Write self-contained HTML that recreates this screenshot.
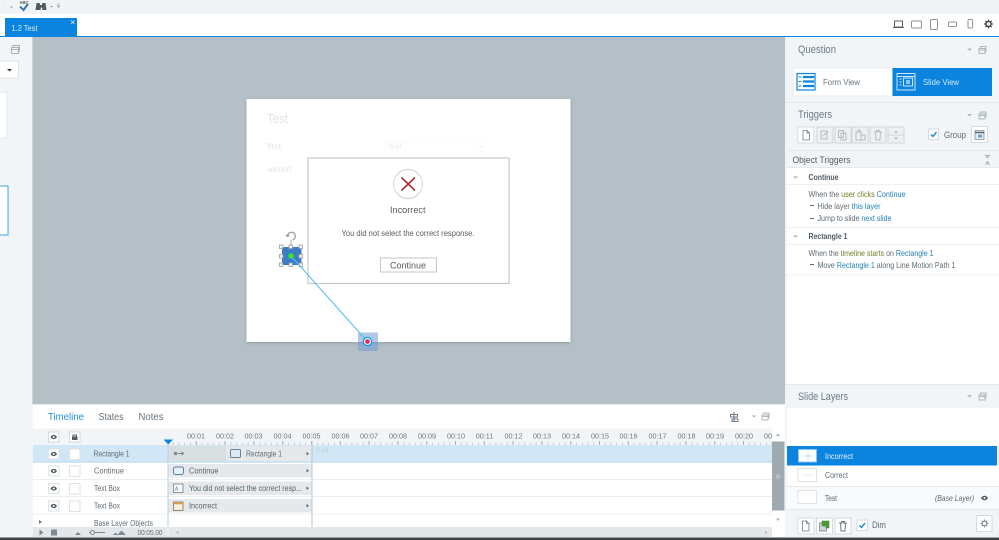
<!DOCTYPE html>
<html><head><meta charset="utf-8"><style>
html,body{margin:0;padding:0;width:999px;height:540px;overflow:hidden;background:#fff}
svg{display:block;filter:blur(.35px)}
text{font-family:"Liberation Sans",sans-serif;font-size:8px;fill:#5f6b73}
.b{fill:#1f82b8}.g{fill:#6f7f24}.h{font-size:11px;fill:#6d7a84}.r{font-size:7.200px;fill:#6b777f}
.i{fill:none;stroke:#8a959c;stroke-width:1}
.ib{fill:#fff;stroke:#d5dbdf;stroke-width:1}
.dis{fill:#eef1f3;stroke:#d0d5d8;stroke-width:1}
</style></head><body>
<svg width="999" height="540" viewBox="0 0 999 540" xmlns="http://www.w3.org/2000/svg">
<defs>
<pattern id="tk" patternUnits="userSpaceOnUse" x="167" y="440" width="5.76" height="5"><rect x="0" y="2.500" width="1" height="2.500" fill="#c4ccd1"/></pattern>
<pattern id="tk2" patternUnits="userSpaceOnUse" x="167" y="440" width="28.8" height="5"><rect x="0" y="1" width="1" height="4" fill="#a5afb5"/></pattern>
<filter id="s" x="-5%" y="-5%" width="110%" height="110%"><feDropShadow dx="0" dy="1" stdDeviation="1.5" flood-color="#55636b" flood-opacity=".4"/></filter>
</defs>
<rect width="999" height="540" fill="#fff"/>
<!-- top bar -->
<rect width="999" height="14" fill="#f1f4f7"/>
<path d="M0 3h3v7H0z" fill="#fafafa" stroke="#ddd" stroke-width=".5"/>
<path d="M10 6.500h3l-1.500 1.500z" fill="#8a959c"/>
<text x="19.500" y="4" style="font-size:4.500px;font-weight:bold;fill:#555" textLength="9" lengthAdjust="spacingAndGlyphs">ABC</text>
<path d="M20 6.500l3.500 3.500 4.500-6" fill="none" stroke="#2a74b8" stroke-width="1.900"/>
<path d="M35.500 10l1-7h3l.6 2h1.800l.6-2h3l1 7h-4l-.4-2.500h-1.200l-.4 2.500z" fill="#505a60"/>
<path d="M50 6h3l-1.500 1.500zM57 5.500h3L58.500 8z" fill="#8a959c"/><path d="M57 4h3" stroke="#8a959c" stroke-width=".6"/>
<!-- tab row -->
<rect x="5" y="18" width="72" height="18" fill="#0a84de"/>
<text x="11.500" y="31" style="font-size:8.500px;fill:#d8ecfa" textLength="26" lengthAdjust="spacingAndGlyphs">1.2 Test</text>
<path d="M71 20.500l3.500 3.500M74.500 20.500L71 24" stroke="#d8ecfa" stroke-width=".8"/>
<rect y="36" width="999" height="1.300" fill="#0a84de"/>
<!-- device icons -->
<path d="M894.500 21h8v6h-8zM893 27.500h11" class="i" style="stroke:#56636b"/>
<rect x="911.500" y="21" width="10" height="7" rx="1" class="i"/>
<rect x="930.500" y="19.500" width="7" height="10" rx="1" class="i"/>
<rect x="948.500" y="22" width="8" height="4.500" rx="1" class="i"/>
<rect x="968" y="19.500" width="4.500" height="8.500" rx="1" class="i"/>
<g transform="translate(988.500 24)"><path d="M0-4.400V4.400M-4.400 0H4.400M-3.100-3.100L3.100 3.100M3.100-3.100L-3.100 3.100" stroke="#36424a" stroke-width="1.300"/><circle r="2.500" fill="#fff" stroke="#36424a" stroke-width="1.300"/></g>
<!-- left panel -->
<rect y="37" width="33" height="503" fill="#f1f5f8"/>
<rect x="32" y="37" width="1" height="367" fill="#cfd6da"/>
<path d="M11.500 47.500h7v6h-7zM13 47.500v-2h6.500v5.500h-1M11.500 49.500h7" class="i" style="stroke:#aab3b9"/>
<rect x="-1" y="61" width="19.500" height="17" fill="#fff" stroke="#dfe4e7"/>
<path d="M7 69h5l-2.500 2.500z" fill="#2e3a42"/>
<rect x="-1" y="92" width="8" height="46" fill="#fff" stroke="#e2e6e9"/>
<rect x="-1" y="186" width="9" height="49" fill="#fff" stroke="#38a7e6"/>
<!-- canvas -->
<rect x="33" y="37" width="752" height="367" fill="#b5c0c6"/>
<rect x="246.500" y="99" width="324" height="243" fill="#fff" filter="url(#s)"/>
<text x="267" y="123" style="font-size:12.500px;fill:#e2e2e2" textLength="21" lengthAdjust="spacingAndGlyphs">Test</text>
<text x="267" y="149" style="font-size:8.500px;fill:#e4e4e4" textLength="14" lengthAdjust="spacingAndGlyphs">first</text>
<text x="389" y="149" style="font-size:8.500px;fill:#ececec" textLength="13" lengthAdjust="spacingAndGlyphs">first</text>
<rect x="385" y="142" width="98" height="10" fill="none" stroke="#f9f9f9"/>
<path d="M479 146.500h3l-1.500 1.500z" fill="#e4e4e4"/>
<text x="267" y="172" style="font-size:8.500px;fill:#e4e4e4" textLength="24" lengthAdjust="spacingAndGlyphs">second</text>
<!-- dialog -->
<rect x="308" y="158" width="201" height="125.500" fill="#fff" stroke="#c8c8c8" stroke-width="1.200"/>
<circle cx="408" cy="184" r="14.500" fill="#fff" stroke="#cfcfcf" stroke-width=".9"/>
<path d="M401.500 177.500L415 190.500M415 177.500L401.500 190.500" stroke="#a72c33" stroke-width="1.600"/>
<text x="390" y="213" style="font-size:9.500px;fill:#5a5a5a" textLength="35.500" lengthAdjust="spacingAndGlyphs">Incorrect</text>
<text x="341.500" y="236" style="font-size:8px;fill:#5a5a5a" textLength="133" lengthAdjust="spacingAndGlyphs">You did not select the correct response.</text>
<rect x="380.500" y="258" width="56" height="14" fill="#fff" stroke="#c4c4c4" stroke-width="1"/>
<text x="390" y="268.500" style="font-size:9.500px;fill:#5a5a5a" textLength="36" lengthAdjust="spacingAndGlyphs">Continue</text>
<!-- motion path object -->
<rect x="282" y="247" width="19.500" height="18" fill="#3a7ec6"/>
<path d="M291 246v-6.500" stroke="#aaa" stroke-width="1"/>
<path d="M287.500 236.500a3.900 3.900 0 1 1 5.500 3.200M287.500 236.500l-1.500-1.500M287.500 236.500l1.700-1.200" fill="none" stroke="#9a9a9a" stroke-width="1.300"/>
<g fill="#f4f4f4" stroke="#9c9c9c" stroke-width=".8">
<rect x="279.500" y="245" width="3.500" height="3.500"/><rect x="289" y="245" width="3.500" height="3.500"/><rect x="299" y="245" width="3.500" height="3.500"/>
<rect x="279.500" y="254.500" width="3.500" height="3.500"/><rect x="299" y="254.500" width="3.500" height="3.500"/>
<rect x="279.500" y="263" width="3.500" height="3.500"/><rect x="289" y="263" width="3.500" height="3.500"/><rect x="299" y="263" width="3.500" height="3.500"/>
</g>
<rect x="358" y="332.500" width="20" height="18.500" fill="#6d9bd6" fill-opacity=".55"/>
<path d="M291 256L367 341" stroke="#53bdf5" stroke-width="1"/>
<circle cx="291" cy="256" r="2.700" fill="#3fe61f"/>
<circle cx="367.500" cy="341.500" r="4.700" fill="#0a9bf0"/><circle cx="367.500" cy="341.500" r="3.500" fill="#fff"/><circle cx="367.500" cy="341.500" r="2.400" fill="#e8304f"/>
<!-- right panel -->
<rect x="785" y="37" width="214" height="500" fill="#f1f5f8"/>
<text x="798" y="53" class="h" textLength="38" lengthAdjust="spacingAndGlyphs">Question</text>
<path d="M967 48.500h5l-2.500 2.500z" fill="#b0b9bf"/>
<path d="M979 48.500h6v5h-6zM980.500 48.500v-2h5.500v5h-1M979 50h6" class="i" style="stroke:#b0b9bf"/>
<rect x="793" y="68" width="99.500" height="28" fill="#fff" stroke="#e9edf0"/>
<rect x="892.500" y="68" width="99.500" height="28" fill="#0a84de"/>
<rect x="797" y="73.500" width="18" height="16.500" fill="#fff" stroke="#0a84de" stroke-width="1.200"/>
<path d="M803 77h11M803 81.500h11M803 86h11" stroke="#0a84de" stroke-width="2.200"/>
<path d="M798.500 77h3M798.500 81.500h3M798.500 86h3" stroke="#0a84de" stroke-width="1"/>
<text x="823" y="85" style="font-size:8.500px;fill:#67747d" textLength="37" lengthAdjust="spacingAndGlyphs">Form View</text>
<rect x="897" y="73.500" width="18" height="16.500" fill="none" stroke="#cde6f8" stroke-width="1"/>
<path d="M897 76.500h18M899.500 79h2M899.500 82h2M899.500 85h2" stroke="#cde6f8" stroke-width="1"/>
<rect x="903.500" y="78" width="9" height="8" fill="none" stroke="#cde6f8"/><rect x="906" y="80" width="4" height="4" fill="#8cc6ee"/>
<text x="923" y="85" style="font-size:8.500px;fill:#d4ebfa" textLength="36" lengthAdjust="spacingAndGlyphs">Slide View</text>
<rect x="785" y="102" width="214" height="1" fill="#e3e8eb"/>
<text x="798" y="118" class="h" textLength="34" lengthAdjust="spacingAndGlyphs">Triggers</text>
<path d="M967 114h5l-2.500 2.500z" fill="#b0b9bf"/>
<path d="M979 114h6v5h-6zM980.500 114v-2h5.500v5h-1M979 115.500h6" class="i" style="stroke:#b0b9bf"/>
<rect x="798" y="127" width="16" height="16" class="ib"/>
<path d="M803 130.500h4l2.500 2.500v7h-6.500zM807 130.500v2.500h2.500" fill="none" stroke="#6d7a84" stroke-width=".8"/>
<rect x="817" y="127" width="16" height="16" class="dis"/><path d="M821 131h6v8h-6zM823 136l5-5" fill="none" stroke="#b3bbc0"/>
<rect x="835" y="127" width="16" height="16" class="dis"/><path d="M838.500 130.500h5v7h-5zM841 133h5v7h-5z" fill="none" stroke="#b3bbc0"/>
<rect x="852" y="127" width="16" height="16" class="dis"/><path d="M856 132h5v8h-5zM861 135h4v5h-4zM858 132v-2h2v2" fill="none" stroke="#b3bbc0"/>
<rect x="870" y="127" width="16" height="16" class="dis"/><path d="M874 132h8M875.500 132l.5 8h4l.5-8M876.500 132v-1.500h3v1.500" fill="none" stroke="#b3bbc0"/>
<rect x="888" y="127" width="16" height="16" class="dis"/><path d="M888 135h16" stroke="#d0d5d8"/><path d="M894 132.500h4l-2-2zM894 137.500h4l-2 2z" fill="#a8b1b7"/>
<rect x="928.500" y="129" width="10" height="10.500" fill="#fff" stroke="#d5dbdf"/>
<path d="M931 134.500l2 2 3.500-4.500" fill="none" stroke="#0a84de" stroke-width="1.400"/>
<text x="944" y="138" style="font-size:9px" textLength="22" lengthAdjust="spacingAndGlyphs">Group</text>
<rect x="971.500" y="126.500" width="16" height="16" class="ib"/>
<path d="M975 130.500h9v9h-9z" fill="#e8edf1" stroke="#7c8a93" stroke-width=".8"/><path d="M975 132.500h9" stroke="#566470" stroke-width="1.400"/><rect x="978" y="134.500" width="4" height="3" fill="#6fa5d4"/>
<rect x="787" y="150" width="212" height="1" fill="#e3e8eb"/>
<rect x="787" y="151" width="212" height="16.500" fill="#f1f5f8"/>
<text x="792.500" y="163" style="font-size:9px;fill:#4f5c64" textLength="58" lengthAdjust="spacingAndGlyphs">Object Triggers</text>
<path d="M985 155.500h5M985 164h5" stroke="#a5aeb4"/><path d="M985.500 156.500h4l-2 2zM985.500 163h4l-2-2z" fill="#a5aeb4"/>
<rect x="787" y="167.500" width="212" height="217" fill="#fff"/>
<rect x="787" y="167" width="212" height="1" fill="#e6eaed"/>
<rect x="787" y="184" width="212" height="1" fill="#eef1f3"/>
<path d="M793 176.500h5l-2.500 2z" fill="#a0aab0"/>
<text x="808.500" y="180" style="font-size:8px;font-weight:bold;fill:#4f5c64" textLength="30" lengthAdjust="spacingAndGlyphs">Continue</text>
<text x="808.500" y="197" style="font-size:7.800px" textLength="97" lengthAdjust="spacingAndGlyphs">When the <tspan class="g">user clicks</tspan> <tspan class="b">Continue</tspan></text>
<path d="M810 205.500h4M810 218.500h4" stroke="#5f6b73"/>
<text x="817.500" y="209" style="font-size:7.800px" textLength="63" lengthAdjust="spacingAndGlyphs">Hide layer <tspan class="b">this layer</tspan></text>
<text x="817.500" y="221" style="font-size:7.800px" textLength="74" lengthAdjust="spacingAndGlyphs">Jump to slide <tspan class="b">next slide</tspan></text>
<rect x="787" y="227" width="212" height="1" fill="#eef1f3"/>
<rect x="787" y="244" width="212" height="1" fill="#eef1f3"/>
<path d="M793 235.500h5l-2.500 2z" fill="#a0aab0"/>
<text x="808.500" y="239" style="font-size:8px;font-weight:bold;fill:#4f5c64" textLength="39" lengthAdjust="spacingAndGlyphs">Rectangle 1</text>
<text x="808.500" y="256" style="font-size:7.800px" textLength="125" lengthAdjust="spacingAndGlyphs">When the <tspan class="g">timeline starts</tspan> on <tspan class="b">Rectangle 1</tspan></text>
<path d="M810 264.500h4" stroke="#5f6b73"/>
<text x="817.500" y="268" style="font-size:7.800px" textLength="138" lengthAdjust="spacingAndGlyphs">Move <tspan class="b">Rectangle 1</tspan> along Line Motion Path 1</text>
<rect x="787" y="274.500" width="212" height="1" fill="#eef1f3"/>
<!-- slide layers -->
<rect x="785" y="384" width="214" height="24" fill="#f1f5f8"/>
<rect x="785" y="384" width="214" height="1" fill="#e3e8eb"/>
<text x="798" y="400" class="h" textLength="50" lengthAdjust="spacingAndGlyphs">Slide Layers</text>
<path d="M967 395h5l-2.500 2.500z" fill="#b0b9bf"/>
<path d="M979 395h6v5h-6zM980.500 395v-2h5.500v5h-1M979 396.500h6" class="i" style="stroke:#b0b9bf"/>
<rect x="787" y="408" width="212" height="38" fill="#fff"/>
<rect x="787" y="446" width="210" height="19.500" fill="#0a84de"/>
<rect x="798.500" y="449.500" width="18" height="12.500" fill="#fff" stroke="#8cc6ee"/>
<path d="M803 456h10M808 452.500v7" stroke="#b9dcf4"/>
<text x="825" y="459" style="font-size:8.200px;fill:#e4f2fc" textLength="28" lengthAdjust="spacingAndGlyphs">Incorrect</text>
<rect x="787" y="465.500" width="212" height="20.500" fill="#fff"/>
<rect x="798" y="468.500" width="18.500" height="13" fill="#fff" stroke="#dfe4e7"/>
<path d="M803 475h10M808 472v7" stroke="#eef0f2"/>
<text x="825" y="478" style="font-size:8.200px" textLength="23" lengthAdjust="spacingAndGlyphs">Correct</text>
<rect x="787" y="486" width="212" height="1" fill="#e6eaed"/>
<rect x="787" y="487" width="212" height="22" fill="#f8fafb"/>
<rect x="798" y="490.500" width="18.500" height="13" fill="#fff" stroke="#dfe4e7"/>
<text x="825" y="501" style="font-size:8.200px" textLength="12" lengthAdjust="spacingAndGlyphs">Test</text>
<text x="935" y="501" style="font-size:8.200px;font-style:italic" textLength="39" lengthAdjust="spacingAndGlyphs">(Base Layer)</text>
<path d="M981 498c2-3 5-3 7 0-2 3-5 3-7 0z" fill="#4f5c64"/><circle cx="984.500" cy="498" r="1" fill="#fff"/>
<rect x="787" y="509" width="212" height="1" fill="#e3e8eb"/>
<rect x="798" y="518" width="16" height="16" class="ib"/>
<path d="M802.500 521h4l2.500 2.500v7.500h-6.500zM806.500 521v2.500h2.500" fill="none" stroke="#6d7a84" stroke-width=".8"/>
<rect x="816.500" y="518" width="16" height="16" class="ib"/>
<path d="M819.500 523h7v8h-7z" fill="#cfd6da" stroke="#6d7a84" stroke-width=".7"/><path d="M822 521h7v7h-3v-2h-4z" fill="#4e9a3a" stroke="#3b7a2c" stroke-width=".5"/>
<rect x="835" y="518" width="16" height="16" class="ib"/>
<path d="M839 523h8M840.500 523l.5 8h4l.5-8M841.500 523v-1.500h3v1.500" fill="none" stroke="#6d7a84"/>
<rect x="857" y="520" width="10.500" height="10.500" fill="#fff" stroke="#d5dbdf"/>
<path d="M859.500 525.500l2 2 3.500-4.500" fill="none" stroke="#0a84de" stroke-width="1.400"/>
<text x="872" y="528" style="font-size:8.800px" textLength="14" lengthAdjust="spacingAndGlyphs">Dim</text>
<rect x="976.500" y="515.500" width="15.500" height="16" class="ib"/>
<g transform="translate(984.500 523.500)"><path d="M0-4V4M-4 0H4M-2.800-2.800L2.800 2.800M2.800-2.800L-2.800 2.800" stroke="#7c8a93" stroke-width="1"/><circle r="2.300" fill="#fff" stroke="#7c8a93" stroke-width="1.100"/></g>
<!-- timeline -->
<rect x="33" y="404" width="752" height="133" fill="#fff"/>
<rect x="33" y="404" width="752" height="1" fill="#e6e9ec"/>
<text x="48" y="420" style="font-size:10px;fill:#1f8fe0" textLength="36" lengthAdjust="spacingAndGlyphs">Timeline</text>
<text x="98.500" y="420" style="font-size:10px;fill:#66737c" textLength="25" lengthAdjust="spacingAndGlyphs">States</text>
<text x="138.500" y="420" style="font-size:10px;fill:#66737c" textLength="25" lengthAdjust="spacingAndGlyphs">Notes</text>
<path d="M734 412v10M730.500 414.500h7v2.500h-7zM732 419h6v2.500h-6z" fill="none" stroke="#6d7a84"/>
<path d="M752 415.500h4l-2 2z" fill="#a5aeb4"/>
<path d="M762 415h6v5h-6zM763.500 415v-2h5.500v5h-1M762 416.500h6" class="i" style="stroke:#b0b9bf"/>
<rect x="33" y="428.500" width="739" height="16.500" fill="#f1f5f8"/>
<rect x="168" y="440" width="604" height="5" fill="url(#tk)"/>
<rect x="168" y="440" width="604" height="5" fill="url(#tk2)"/>
<text x="196" y="438.500" text-anchor="middle" class="r">00:01</text>
<text x="225" y="438.500" text-anchor="middle" class="r">00:02</text>
<text x="253.500" y="438.500" text-anchor="middle" class="r">00:03</text>
<text x="282.500" y="438.500" text-anchor="middle" class="r">00:04</text>
<text x="311.500" y="438.500" text-anchor="middle" class="r">00:05</text>
<text x="340.500" y="438.500" text-anchor="middle" class="r">00:06</text>
<text x="369" y="438.500" text-anchor="middle" class="r">00:07</text>
<text x="398" y="438.500" text-anchor="middle" class="r">00:08</text>
<text x="427" y="438.500" text-anchor="middle" class="r">00:09</text>
<text x="456" y="438.500" text-anchor="middle" class="r">00:10</text>
<text x="484.500" y="438.500" text-anchor="middle" class="r">00:11</text>
<text x="513.500" y="438.500" text-anchor="middle" class="r">00:12</text>
<text x="542" y="438.500" text-anchor="middle" class="r">00:13</text>
<text x="571" y="438.500" text-anchor="middle" class="r">00:14</text>
<text x="600" y="438.500" text-anchor="middle" class="r">00:15</text>
<text x="628.500" y="438.500" text-anchor="middle" class="r">00:16</text>
<text x="657.500" y="438.500" text-anchor="middle" class="r">00:17</text>
<text x="686.500" y="438.500" text-anchor="middle" class="r">00:18</text>
<text x="715" y="438.500" text-anchor="middle" class="r">00:19</text>
<text x="744" y="438.500" text-anchor="middle" class="r">00:20</text>
<text x="764" y="438.500" class="r">00</text>
<!-- header icons -->
<rect x="48.500" y="432" width="10.500" height="10" class="ib"/>
<path d="M50.500 437c1.800-2.800 4.700-2.800 6.500 0-1.800 2.800-4.700 2.800-6.500 0z" fill="#4f5c64"/><circle cx="53.700" cy="437" r="1" fill="#fff"/>
<rect x="69.500" y="432" width="10.500" height="10" class="ib"/>
<rect x="72" y="436.500" width="5.500" height="3.500" fill="#4f5c64"/><path d="M73 436.500v-1.500h3.500v1.500" fill="none" stroke="#4f5c64"/>
<!-- rows -->
<rect x="33" y="445" width="739" height="17.500" fill="#d2e7f6"/>
<rect x="33" y="461.500" width="739" height="1.200" fill="#bcdcf3"/>
<path d="M33 479.500h739M33 496.500h739M33 514h739" stroke="#eceff1"/>
<rect x="48.500" y="449" width="10.500" height="10" fill="#fff" stroke="#dde3e6"/><rect x="69.500" y="449" width="10.500" height="10.500" fill="#fff" stroke="#dde3e6"/>
<rect x="48.500" y="466" width="10.500" height="10" fill="#fff" stroke="#dde3e6"/><rect x="69.500" y="466" width="10.500" height="10.500" fill="#fff" stroke="#dde3e6"/>
<rect x="48.500" y="483.500" width="10.500" height="10" fill="#fff" stroke="#dde3e6"/><rect x="69.500" y="483.500" width="10.500" height="10.500" fill="#fff" stroke="#dde3e6"/>
<rect x="48.500" y="501" width="10.500" height="10" fill="#fff" stroke="#dde3e6"/><rect x="69.500" y="501" width="10.500" height="10.500" fill="#fff" stroke="#dde3e6"/>
<g fill="#4f5c64">
<path d="M50.500 454c1.800-2.800 4.700-2.800 6.500 0-1.800 2.800-4.700 2.800-6.500 0z"/><path d="M50.500 471c1.800-2.800 4.700-2.800 6.500 0-1.800 2.800-4.700 2.800-6.500 0z"/><path d="M50.500 488.500c1.800-2.800 4.700-2.800 6.500 0-1.800 2.800-4.700 2.800-6.500 0z"/><path d="M50.500 506c1.800-2.800 4.700-2.800 6.500 0-1.800 2.800-4.700 2.800-6.500 0z"/>
</g>
<g fill="#fff"><circle cx="53.700" cy="454" r="1"/><circle cx="53.700" cy="471" r="1"/><circle cx="53.700" cy="488.500" r="1"/><circle cx="53.700" cy="506" r="1"/></g>
<text x="93.500" y="456.500" style="font-size:8.200px" textLength="36" lengthAdjust="spacingAndGlyphs">Rectangle 1</text>
<text x="94" y="473.500" style="font-size:8.200px" textLength="30" lengthAdjust="spacingAndGlyphs">Continue</text>
<text x="94" y="491" style="font-size:8.200px" textLength="26" lengthAdjust="spacingAndGlyphs">Text Box</text>
<text x="94" y="508.500" style="font-size:8.200px" textLength="26" lengthAdjust="spacingAndGlyphs">Text Box</text>
<path d="M39 520l3 2-3 2z" fill="#6d7a84"/>
<text x="94" y="526" style="font-size:8.200px" textLength="59" lengthAdjust="spacingAndGlyphs">Base Layer Objects</text>
<!-- track blocks -->
<rect x="168" y="446" width="144" height="15" fill="#e5e9ec"/>
<rect x="168" y="446" width="58" height="15" fill="#d9dee1"/>
<circle cx="175.500" cy="453.500" r="1.700" fill="#7c8a93"/><path d="M178 453.500h5M181.500 451.800l2 1.700-2 1.700" fill="none" stroke="#7c8a93"/>
<rect x="230.500" y="449.500" width="10" height="8" rx="1" fill="#dce9f5" stroke="#6d8197"/>
<text x="246" y="456.500" style="font-size:8.200px" textLength="36" lengthAdjust="spacingAndGlyphs">Rectangle 1</text>
<rect x="168" y="464" width="144" height="13.500" fill="#e5e9ec"/>
<rect x="173.500" y="467" width="10" height="7.500" rx="2" fill="#e4f0fa" stroke="#5f7f9f"/>
<text x="189" y="473.500" style="font-size:8.200px;fill:#56636b" textLength="29.500" lengthAdjust="spacingAndGlyphs">Continue</text>
<rect x="168" y="481.500" width="144" height="13.500" fill="#e5e9ec"/>
<rect x="173.500" y="484" width="9.500" height="8.500" fill="#f7f9fb" stroke="#8a959c"/>
<text x="175" y="490.500" style="font-size:5px;fill:#3a7ec6">A</text>
<text x="189" y="491" style="font-size:8.200px;fill:#56636b" textLength="113" lengthAdjust="spacingAndGlyphs">You did not select the correct resp...</text>
<rect x="168" y="499" width="144" height="13.500" fill="#e5e9ec"/>
<rect x="173.500" y="502" width="9.500" height="8.500" fill="#fbeedd" stroke="#8a8a80"/><path d="M173.500 503.500h9.500" stroke="#e89a30" stroke-width="1.500"/>
<text x="189" y="508.500" style="font-size:8.200px;fill:#56636b" textLength="28" lengthAdjust="spacingAndGlyphs">Incorrect</text>
<g fill="#56636b"><path d="M306.500 452l2.500 1.700-2.500 1.700z"/><path d="M306.500 469l2.500 1.700-2.500 1.700z"/><path d="M306.500 486.500l2.500 1.700-2.500 1.700z"/><path d="M306.500 504l2.500 1.700-2.500 1.700z"/></g>
<rect x="167.500" y="441" width="1" height="86" fill="#b9d2e3"/>
<rect x="311.500" y="441" width="1" height="86" fill="#b5c5cf"/>
<path d="M163.500 439.500h9.500l-4.750 5z" fill="#0a84de"/>
<text x="316" y="452.500" style="font-size:7px;fill:#bfd0dc">End</text>
<!-- scrollbars -->
<rect x="772" y="428" width="13" height="109" fill="#fff"/>
<rect x="772" y="441.500" width="12.500" height="69" fill="#9faab0"/>
<path d="M776 475h4M776 476.500h4M776 478h4" stroke="#c8d0d4" stroke-width=".8"/>
<path d="M776 436h4l-2-2.500z" fill="#aab3b9"/>
<path d="M776 518.500h4l-2 2.500z" fill="#aab3b9"/>
<rect x="33" y="527" width="739" height="10" fill="#e3e7ea"/>
<path d="M39.500 529.500l4 3-4 3z" fill="#7c8a93"/>
<rect x="51" y="529.500" width="6" height="6" fill="#7c8a93"/>
<path d="M75 535l3-3 3 3z" fill="#7c8a93"/>
<path d="M89 532.500h16" stroke="#7c8a93"/><circle cx="92.500" cy="532.500" r="2" fill="#e3e7ea" stroke="#7c8a93"/>
<path d="M113 535l2.500-2.500 2.500 2.500zM117 535l4.500-4.500 4.500 4.500z" fill="#7c8a93"/>
<text x="137.500" y="535" style="font-size:7.600px" textLength="25" lengthAdjust="spacingAndGlyphs">00:05.00</text>
<rect x="167.500" y="527" width="1" height="10" fill="#f1f4f6"/>
<path d="M176 532.500l2.500-1.500v3z" fill="#aab3b9"/>
<path d="M765 531v3l2.500-1.500z" fill="#aab3b9"/>
<!-- bottom edge -->
<rect y="537.500" width="999" height="2.500" fill="#3d4347"/>
</svg>
</body></html>
